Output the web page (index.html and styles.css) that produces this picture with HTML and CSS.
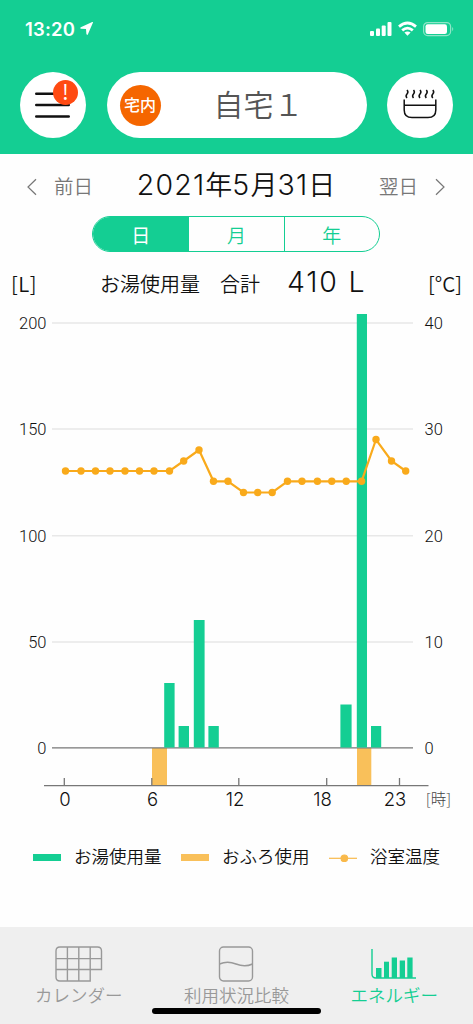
FILE: index.html
```html
<!DOCTYPE html>
<html lang="ja">
<head>
    <meta charset="UTF-8">
    <title>エネルギー</title>
    <link rel="stylesheet" href="styles.css">
</head>
<body>
    <header>
        <div class="status-bar">
            <span class="time">13:20</span>
            <svg class="location" width="14" height="15" viewBox="0 0 14 15"><path d="M13 1.6 Q13.2 0.8 12.2 1 L0.8 6.2 Q-0.4 7.2 1 7.7 L6 8 L6.4 13.1 Q7 14.5 7.8 13.4 Z"/></svg>
            <svg class="signals" width="86" height="18" viewBox="0 0 86 18">
                <rect x="1" y="11" width="4" height="5" rx="1"/>
                <rect x="7" y="8.5" width="4" height="7.5" rx="1"/>
                <rect x="12.7" y="5.5" width="4" height="10.5" rx="1"/>
                <rect x="18.5" y="2" width="4" height="14" rx="1"/>
                <g class="wifi">
                    <path d="M30 6.6 Q38.5 -0.6 47 6.6"/>
                    <path d="M33.2 10.4 Q38.5 5.8 43.8 10.4"/>
                </g>
                <path d="M35.4 12.6 Q38.5 10.3 41.6 12.6 L38.5 15.8 Z"/>
                <rect class="battery" x="54.6" y="2.6" width="27" height="13" rx="4"/>
                <rect x="56.5" y="4.3" width="21.5" height="9.6" rx="2.2"/>
                <path class="battery-tip" d="M83.2 7 Q85.3 9 83.2 11.2 Z"/>
            </svg>
        </div>
        <div class="top-nav">
            <button class="round-btn">
                <svg width="66" height="66" viewBox="0 0 66 66">
                    <path class="menu-line" d="M16.3 21.8 H48.7 M16.3 33 H48.7 M16.3 44.5 H48.7"/>
                </svg>
                <span class="alert">!</span>
            </button>
            <div class="home-name">
                <span class="place">宅内</span>
                <span class="name">自宅１</span>
            </div>
            <button class="round-btn">
                <svg class="bath" width="66" height="66" viewBox="0 0 66 66">
                    <path d="M17.2 27.5 V38 Q17.2 45.6 25 45.6 H41 Q48.8 45.6 48.8 38 V27.5 M17.2 33.2 H48.8"/>
                    <path d="M20 18 q1.8 2 0 4 t0 4 M26.5 18 q1.8 2 0 4 t0 4 M33 18 q1.8 2 0 4 t0 4 M39.3 18 q1.8 2 0 4 t0 4 M45.8 18 q1.8 2 0 4 t0 4"/>
                </svg>
            </button>
        </div>
    </header>

    <main>
        <div class="date-row">
            <div class="day-link">
                <svg width="10" height="18" viewBox="0 0 10 18"><path d="M9 1.2 L1 9 L9 16.8"/></svg>
                <span>前日</span>
            </div>
            <h1><b>2021</b>年<b>5</b>月<b>31</b>日</h1>
            <div class="day-link">
                <span>翌日</span>
                <svg width="10" height="18" viewBox="0 0 10 18"><path d="M1 1.2 L9 9 L1 16.8"/></svg>
            </div>
        </div>

        <div class="period">
            <span class="active">日</span>
            <span>月</span>
            <span>年</span>
        </div>

        <div class="summary">
            <span class="unit">[L]</span>
            <span class="total">お湯使用量　合計</span>
            <span class="value">410 L</span>
            <span class="unit">[°C]</span>
        </div>

        <svg class="chart" width="473" height="520" viewBox="0 300 473 520">
            <path class="grid" d="M52 323 H413 M52 429 H413 M52 535.7 H413 M52 642 H413"/>
            <g class="bath-use">
                <rect x="152" y="748" width="15" height="37.5"/>
                <rect x="357" y="748" width="14.3" height="37.5"/>
            </g>
            <path class="axis" d="M52 747.8 H413 M44 785.6 H428.5 M64.3 778 V785 M151.8 778 V785 M238.8 778 V785 M326.7 778 V785 M399.5 778 V785"/>
            <g class="water">
                <rect x="164.2" y="683" width="10.4" height="64.5"/>
                <rect x="178.6" y="726" width="10.4" height="21.5"/>
                <rect x="193.8" y="620" width="10.8" height="127.5"/>
                <rect x="208.4" y="726" width="10.4" height="21.5"/>
                <rect x="340.4" y="704.5" width="11.2" height="43"/>
                <rect x="356.8" y="314" width="10.2" height="433.5"/>
                <rect x="371" y="726" width="10.2" height="21.5"/>
            </g>
            <polyline class="temp" points="65.5,471 81,471 95.5,471 110,471 125,471 139.5,471 154,471 169.5,471 183.7,461 199,450 213.5,481.3 228,481.3 243.5,492.5 257.7,492.5 272.2,492.5 287.5,481.3 302,481.3 317.4,481.3 331.8,481.3 346.2,481.3 361.6,481.3 376,439.5 391.5,461 405.7,471"/>
            <g class="y-labels left">
                <text x="46.5" y="329">200</text>
                <text x="46.5" y="435">150</text>
                <text x="46.5" y="541.5">100</text>
                <text x="46.5" y="648">50</text>
                <text x="46.5" y="754">0</text>
            </g>
            <g class="y-labels">
                <text x="424.5" y="329">40</text>
                <text x="424.5" y="435">30</text>
                <text x="424.5" y="541.5">20</text>
                <text x="424.5" y="648">10</text>
                <text x="424.5" y="754">0</text>
            </g>
            <g class="x-labels">
                <text x="65" y="805.5">0</text>
                <text x="152.5" y="805.5">6</text>
                <text x="235" y="805.5">12</text>
                <text x="322.5" y="805.5">18</text>
                <text x="395" y="805.5">23</text>
                <text class="hour" x="438.5" y="805">[時]</text>
            </g>
        </svg>

        <div class="legend">
            <span class="item"><i class="swatch green"></i>お湯使用量</span>
            <span class="item"><i class="swatch yellow"></i>おふろ使用</span>
            <span class="item">
                <svg width="28" height="8" viewBox="0 0 28 8"><path d="M0 4.3 H28"/><circle cx="15.3" cy="4.3" r="3.3"/></svg>浴室温度
            </span>
        </div>
    </main>

    <footer>
        <div class="tab">
            <svg width="48" height="36" viewBox="0 0 48 36">
                <path d="M5 1 H42.5 Q46.5 1 46.5 5 V23.5 H35.2 V35 H5 Q1 35 1 31 V5 Q1 1 5 1 Z M12.4 1 V35 M23.8 1 V35 M35.2 1 V23.5 M1 12.6 H46.5 M1 23.5 H35.2"/>
            </svg>
            <span>カレンダー</span>
        </div>
        <div class="tab">
            <svg width="36" height="36" viewBox="0 0 36 36">
                <rect x="1.5" y="1" width="33" height="34" rx="4"/>
                <path d="M1.5 18 C8 15.2 13 16 18 18 S28 21 34.5 18"/>
            </svg>
            <span>利用状況比較</span>
        </div>
        <div class="tab active">
            <svg width="46" height="36" viewBox="0 0 46 36">
                <path d="M1 3 V28 Q1 32 5 32 H45"/>
                <g class="mini-bars">
                    <rect x="5" y="22" width="5.5" height="10"/>
                    <rect x="13" y="15.7" width="5" height="16.3"/>
                    <rect x="20.7" y="11.5" width="5.3" height="20.5"/>
                    <rect x="28.7" y="14.5" width="5.3" height="17.5"/>
                    <rect x="36.3" y="11.5" width="5.3" height="20.5"/>
                </g>
            </svg>
            <span>エネルギー</span>
        </div>
        <div class="home-indicator"></div>
    </footer>

    <script>
        // dots on each temperature reading
        const line = document.querySelector('.temp');
        for (const p of Array.from(line.points).reverse()) {
            const dot = document.createElementNS('http://www.w3.org/2000/svg', 'circle');
            dot.setAttribute('class', 'dot');
            dot.setAttribute('cx', p.x);
            dot.setAttribute('cy', p.y);
            dot.setAttribute('r', 3.7);
            line.after(dot);
        }
    </script>
</body>
</html>
```
FILE: styles.css
```css
* {
    box-sizing: border-box;
}
body {
    margin: 0;
    width: 473px;
    height: 1024px;
    display: flex;
    flex-direction: column;
    overflow: hidden;
    background: #fefefe;
    color: #111;
    font-family: "Noto Sans CJK JP", sans-serif;
    font-weight: 350;
}
svg {
    display: block;
    flex: none;
}
header {
    height: 154px;
    background: #14ce93;
}
.status-bar {
    height: 72px;
    padding: 20px 18px 0 25px;
    display: flex;
    align-items: flex-start;
    color: #fff;
}
.time {
    font-family: Inter, sans-serif;
    font-size: 18.5px;
    font-weight: 600;
    line-height: 18px;
    width: 55px;
    letter-spacing: 0.2px;
}
.status-bar svg {
    fill: #fff;
}
.location {
    margin-top: 1px;
}
.signals {
    margin-left: auto;
}
.wifi path {
    fill: none;
    stroke: #fff;
    stroke-width: 2.8;
}
.signals .battery {
    fill: none;
    stroke: #8fe6c8;
    stroke-width: 1.2;
}
.signals .battery-tip {
    fill: #8fe6c8;
}
.top-nav {
    display: flex;
    justify-content: space-between;
    padding: 0 20px;
}
.round-btn {
    position: relative;
    width: 66px;
    height: 66px;
    padding: 0;
    border: none;
    border-radius: 50%;
    background: #fff;
}
.menu-line {
    stroke: #111;
    stroke-width: 2.6;
    stroke-linecap: round;
}
.bath path {
    fill: none;
    stroke: #111;
    stroke-width: 1.5;
}
.alert {
    position: absolute;
    left: 33px;
    top: 8px;
    width: 25px;
    height: 25px;
    border-radius: 50%;
    background: #ff4a12;
    color: #fff;
    font: 400 21px/22px "Noto Sans CJK JP", sans-serif;
    text-align: center;
}
.home-name {
    width: 260px;
    height: 66px;
    padding-left: 13px;
    display: flex;
    align-items: center;
    border-radius: 33px;
    background: #fff;
}
.place {
    width: 41px;
    height: 41px;
    border-radius: 50%;
    background: #f56600;
    color: #fff;
    font-size: 16px;
    font-weight: 500;
    line-height: 38px;
    text-align: center;
}
.name {
    margin: 0 0 4px 53px;
    color: #555;
    font-size: 30px;
    line-height: 60px;
    font-weight: 350;
}
main {
    height: 773px;
}
.date-row {
    height: 62px;
    padding: 2px 28px 0 27px;
    display: flex;
    align-items: center;
    justify-content: space-between;
}
.day-link {
    display: flex;
    align-items: center;
    gap: 17px;
    color: #777;
    font-size: 19.5px;
    line-height: 28px;
}
.day-link svg {
    margin-top: 1px;
    fill: none;
    stroke: #777;
    stroke-width: 1.2;
}
h1 {
    margin: 0 0 4px;
    display: flex;
    align-items: baseline;
    font-size: 27px;
    font-weight: 350;
    line-height: 40px;
}
h1 b {
    font-family: Inter, sans-serif;
    font-weight: 300;
    font-size: 28.5px;
    letter-spacing: 1.2px;
}
.period {
    width: 288px;
    height: 36px;
    margin-left: 92px;
    display: grid;
    grid-template-columns: repeat(3, 1fr);
    border: 1px solid #14ce93;
    border-radius: 18px;
    overflow: hidden;
    color: #14ce93;
    font-size: 19px;
    line-height: 35px;
    text-align: center;
}
.period span + span {
    border-left: 1px solid #14ce93;
}
.period .active {
    background: #14ce93;
    color: #fff;
    font-weight: 400;
}
.summary {
    height: 48px;
    padding: 8px 11px 0;
    display: flex;
    align-items: baseline;
    line-height: 44px;
}
.unit {
    width: 26px;
    font-size: 20.5px;
    letter-spacing: 0.5px;
}
.unit:last-child {
    width: auto;
    margin-left: auto;
    letter-spacing: 0;
}
.total {
    margin-left: 63px;
    font-size: 20px;
}
.value {
    margin-left: 27px;
    font-family: Inter, sans-serif;
    font-size: 28.5px;
    font-weight: 300;
    letter-spacing: 1.8px;
}
.grid {
    stroke: #e8e8e8;
    stroke-width: 1.5;
}
.axis {
    stroke: #777;
    stroke-width: 1.3;
}
.water {
    fill: #14ce93;
}
.bath-use {
    fill: #f9c05a;
}
.temp {
    fill: none;
    stroke: #f9aa1b;
    stroke-width: 2.2;
}
.dot {
    fill: #f9aa1b;
}
.y-labels {
    font-family: Roboto, sans-serif;
    font-size: 16.5px;
    font-weight: 300;
    fill: #111;
}
.left {
    text-anchor: end;
}
.x-labels {
    font-family: Inter, "Noto Sans CJK JP", sans-serif;
    font-size: 18.5px;
    font-weight: 300;
    fill: #111;
    text-anchor: middle;
}
.hour {
    font-family: "Noto Sans CJK JP", sans-serif;
    font-size: 15.5px;
    fill: #444;
}
.legend {
    margin-top: 22px;
    padding: 0 33px;
    display: flex;
    justify-content: space-between;
    font-size: 17.5px;
    line-height: 28px;
}
.item {
    display: flex;
    align-items: center;
    gap: 13px;
}
.swatch {
    width: 28px;
    height: 7px;
    margin-top: 2px;
}
.green {
    background: #14ce93;
}
.yellow {
    background: #f9c05a;
}
.legend svg {
    margin-top: 3px;
    fill: #f9b94a;
    stroke: #f9b94a;
    stroke-width: 1.2;
}
footer {
    position: relative;
    height: 97px;
    padding-top: 19px;
    display: grid;
    grid-template-columns: repeat(3, 1fr);
    background: #efefef;
}
.tab {
    display: flex;
    flex-direction: column;
    align-items: center;
    color: #999;
    font-size: 17.5px;
    line-height: 26px;
}
.tab svg {
    fill: none;
    stroke: #999;
    stroke-width: 1.4;
}
.tab.active {
    color: #14ce93;
}
.tab.active svg {
    stroke: #14ce93;
}
.mini-bars {
    fill: #14ce93;
    stroke: none;
}
.home-indicator {
    position: absolute;
    left: 152px;
    bottom: 10px;
    width: 169px;
    height: 6px;
    border-radius: 3px;
    background: #000;
}
```
